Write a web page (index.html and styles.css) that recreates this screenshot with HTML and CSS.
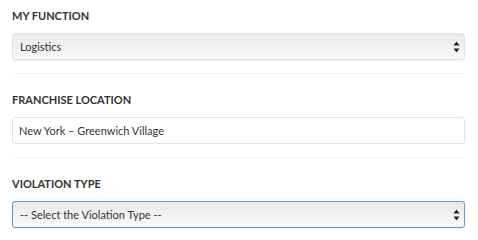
FILE: index.html
```html
<!doctype html>
<html lang="en">
<head>
  <meta charset="utf-8">
  <title>Report a Violation</title>
  <link rel="stylesheet" href="styles.css">
</head>
<body>
	<form class="report">
		<div class="group">
			<label class="title">MY FUNCTION</label>
			<div class="pick">
				<select class="field">
					<option>Logistics</option>
				</select>
				<svg class="arrows" width="7" height="12" viewBox="0 0 7 12"><path d="M3.5 0.5 L6.5 4.5 L0.5 4.5 Z M3.5 11.5 L6.5 7.5 L0.5 7.5 Z" fill="#222"/></svg>
			</div>
		</div>
		<div class="group">
			<label class="title">FRANCHISE LOCATION</label>
			<input class="field text" type="text" value="New York – Greenwich Village">
		</div>
		<div class="group">
			<label class="title">VIOLATION TYPE</label>
			<div class="pick">
				<select class="field focus">
					<option>-- Select the Violation Type --</option>
				</select>
				<svg class="arrows" width="7" height="12" viewBox="0 0 7 12"><path d="M3.5 0.5 L6.5 4.5 L0.5 4.5 Z M3.5 11.5 L6.5 7.5 L0.5 7.5 Z" fill="#222"/></svg>
			</div>
		</div>
	</form>
</body>
</html>
```
FILE: styles.css
```css
html,body{
	background: #fff;
	margin:0; padding:0;
	font-family: Lato, "Open Sans", sans-serif;
	color: #333;
}
.report{ padding: 0 13px 0 12px; }
.group{
	padding: 17px 0 13px;
	border-bottom: 1px solid #f4f4f4;
}
.group:first-child{ padding-top: 7px; }
.group:last-child{ border-bottom: none; }
.title{
	display:block;
	font-size: 11px;
	font-weight: 700;
	line-height: 18px;
	margin-bottom: 8px;
}
.pick{ position: relative; }
.field{
	display:block;
	box-sizing: border-box;
	width: 100%;
	height: 27px;
	margin:0;
	padding: 0 7px;
	font-family: Lato, "Open Sans", sans-serif;
	font-size: 11px;
	color: #333;
	border: 1px solid #ddd;
	border-radius: 3px;
	outline: none;
}
select.field{
	-webkit-appearance: none;
	appearance: none;
	background: linear-gradient(#eaeaea, #f8f8f8);
	border-color: #e2e2e2;
	box-shadow: 0 1px 1px rgba(0,0,0,0.06);
}
select.field.focus{ border-color: #5a9ad8; }
input.text{
	background: #fff;
	border-color: #e4e4e4;
	padding-left: 6px;
}
.arrows{
	position: absolute;
	right: 5px;
	top: 8px;
	pointer-events: none;
}
```
